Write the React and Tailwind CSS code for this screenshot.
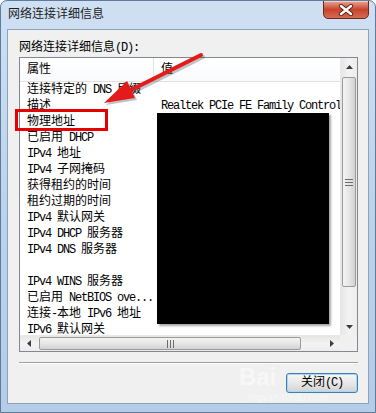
import React from 'react';

// SimSun-like look: ASCII runs are 6px per char, CJK 12px
function T({ s }) {
  const parts = s.split(/([\x00-\x7f]+)/).filter(Boolean);
  return parts.map((p, i) =>
    /[\x00-\x7f]/.test(p) ? (
      <span key={i} className="tracking-[-1.2px] whitespace-pre">{p}</span>
    ) : (
      <span key={i}>{p}</span>
    )
  );
}

const rows = [
  ['连接特定的 DNS 后缀', ''],
  ['描述', 'Realtek PCIe FE Family Controller'],
  ['物理地址', ''],
  ['已启用 DHCP', ''],
  ['IPv4 地址', ''],
  ['IPv4 子网掩码', ''],
  ['获得租约的时间', ''],
  ['租约过期的时间', ''],
  ['IPv4 默认网关', ''],
  ['IPv4 DHCP 服务器', ''],
  ['IPv4 DNS 服务器', ''],
  ['', ''],
  ['IPv4 WINS 服务器', ''],
  ['已启用 NetBIOS ove...', ''],
  ['连接-本地 IPv6 地址', ''],
  ['IPv6 默认网关', ''],
];

function Tri({ dir }) {
  const pts = {
    up: '0,4 3.5,0 7,4',
    down: '0,0 7,0 3.5,4',
    left: '4,0 4,7 0,3.5',
    right: '0,0 0,7 4,3.5',
  }[dir];
  const vertical = dir === 'up' || dir === 'down';
  return (
    <svg width={vertical ? 7 : 4} height={vertical ? 4 : 7}>
      <polygon points={pts} fill="#3d3d3d" />
    </svg>
  );
}

function VScroll() {
  return (
    <div className="w-[17px] flex flex-col bg-gradient-to-r from-[#e6e6e6] via-[#f3f3f3] to-[#ececec] border-l border-[#e9e9e9]">
      <div className="h-[17px] flex items-center justify-center">
        <Tri dir="up" />
      </div>
      <div className="h-[2px]" />
      <div className="mx-[1px] h-[210px] rounded-[2px] border border-[#9a9a9a] bg-gradient-to-r from-[#f4f4f4] via-[#e6e6e6] to-[#d2d2d2] flex items-center justify-center">
        <svg width="8" height="7">
          <rect x="0" y="0" width="8" height="1" fill="#6b6b6b" />
          <rect x="0" y="3" width="8" height="1" fill="#6b6b6b" />
          <rect x="0" y="6" width="8" height="1" fill="#6b6b6b" />
        </svg>
      </div>
      <div className="flex-1" />
      <div className="h-[17px] flex items-center justify-center">
        <Tri dir="down" />
      </div>
    </div>
  );
}

function HScroll() {
  return (
    <div className="flex-1 flex bg-gradient-to-b from-[#e6e6e6] via-[#f3f3f3] to-[#ececec] border-t border-[#e9e9e9]">
      <div className="w-[17px] flex items-center justify-center">
        <Tri dir="left" />
      </div>
      <div className="my-[1px] ml-[2px] w-[262px] rounded-[2px] border border-[#9a9a9a] bg-gradient-to-b from-[#f4f4f4] via-[#e6e6e6] to-[#d2d2d2] flex items-center justify-center">
        <svg width="7" height="8">
          <rect x="0" y="0" width="1" height="8" fill="#6b6b6b" />
          <rect x="3" y="0" width="1" height="8" fill="#6b6b6b" />
          <rect x="6" y="0" width="1" height="8" fill="#6b6b6b" />
        </svg>
      </div>
      <div className="flex-1" />
      <div className="w-[17px] flex items-center justify-center">
        <Tri dir="right" />
      </div>
    </div>
  );
}

export default function App() {
  return (
    <div className="relative w-[376px] h-[413px] overflow-hidden rounded-t-[7px] border border-[#5f7b9c] bg-gradient-to-b from-[#cfe0f3] via-[#bcd3ec] to-[#b4cce8] font-['Liberation_Mono','Noto_Sans_CJK_SC',monospace] text-[12px] text-black">
      {/* title bar */}
      <div className="h-[28px] flex items-start justify-between pl-[7px]">
        <span className="mt-[7px] leading-[14px] text-[#1e1e1e]">网络连接详细信息</span>
        <div className="w-[46px] h-[19px] mr-[6px] -mt-[1px] rounded-b-[5px] border border-[#6a2a20] bg-gradient-to-b from-[#e8a494] via-[#c8422c] to-[#d66a52] shadow-[inset_0_1px_0_rgba(255,255,255,0.5)] flex items-center justify-center">
          <svg width="16" height="12" viewBox="0 0 16 12">
            <path d="M3 2 L13 10 M13 2 L3 10" stroke="#5b2018" strokeWidth="4.2" strokeLinecap="round" />
            <path d="M3 2 L13 10 M13 2 L3 10" stroke="#ffffff" strokeWidth="2.4" strokeLinecap="round" />
          </svg>
        </div>
      </div>

      {/* client area */}
      <div className="mx-[6px] h-[375px] bg-[#f0f0f0] border border-[#8ea2ba] flex flex-col pl-[11px] pr-[10px]">
        <div className="mt-[11px] leading-[14px]">
          <T s="网络连接详细信息(D):" />
        </div>

        {/* list view */}
        <div className="mt-[2px] h-[295px] border border-[#828790] bg-white flex flex-col">
          <div className="h-[277px] flex">
            <div className="flex-1 overflow-hidden flex flex-col">
              <div className="h-[24px] shrink-0 flex border-b border-[#e2e2e2] bg-gradient-to-b from-white to-[#f9fafc]">
                <div className="w-[134px] border-r border-[#e2e2e2] pl-[7px] leading-[24px]">属性</div>
                <div className="pl-[7px] leading-[24px]">值</div>
              </div>
              {rows.map(([k, v], i) => (
                <div key={i} className="h-[16px] shrink-0 flex leading-[16px] whitespace-nowrap">
                  <div className="w-[134px] shrink-0 pl-[7px]">
                    <T s={k} />
                  </div>
                  <div className="pl-[7px]">
                    <T s={v} />
                  </div>
                </div>
              ))}
            </div>
            <VScroll />
          </div>
          <div className="h-[16px] flex">
            <HScroll />
            <div className="w-[17px] bg-[#f0f0f0]" />
          </div>
        </div>

        <div className="mt-[10px] border-t border-[#a0a0a0] border-b border-b-white" />

        <div className="mt-[9px] self-end w-[72px] h-[20px] rounded-[3px] border border-[#3c7fb1] bg-gradient-to-b from-[#f6f6f6] via-[#e8e8e8] to-[#d2d2d2] shadow-[inset_0_0_0_1px_#a8d8f4] flex items-center justify-center leading-[14px]">
          <T s="关闭(C)" />
        </div>
      </div>

      {/* watermark */}
      <div className="absolute left-[238px] top-[364px] text-[24px] font-bold leading-[24px] text-white/50 font-['Liberation_Sans',sans-serif]">
        Bai
      </div>
      <div className="absolute left-[246px] top-[392px] text-[10px] leading-[10px] text-white/50 font-['Liberation_Sans',sans-serif]">
        jingyan.baidu.com
      </div>

      {/* redaction */}
      <div className="absolute left-[156px] top-[112px] w-[172px] h-[211px] bg-black shadow-[2px_2px_2px_rgba(0,0,0,0.35)]" />

      {/* red highlight box */}
      <div className="absolute left-[14px] top-[108px] w-[93px] h-[22px] border-[3px] border-[#e60000]" />

      {/* red arrow */}
      <svg className="absolute left-0 top-0" width="376" height="413">
        <g opacity="0.35" transform="translate(2 2)">
          <line x1="200" y1="54" x2="124" y2="92" stroke="#555" strokeWidth="4" strokeLinecap="round" />
          <polygon points="103,102 134,97 126,80" fill="#555" />
        </g>
        <line x1="200" y1="54" x2="124" y2="92" stroke="#e31b1b" strokeWidth="4" strokeLinecap="round" />
        <polygon points="103,102 134,97 126,80" fill="#e31b1b" />
      </svg>
    </div>
  );
}
